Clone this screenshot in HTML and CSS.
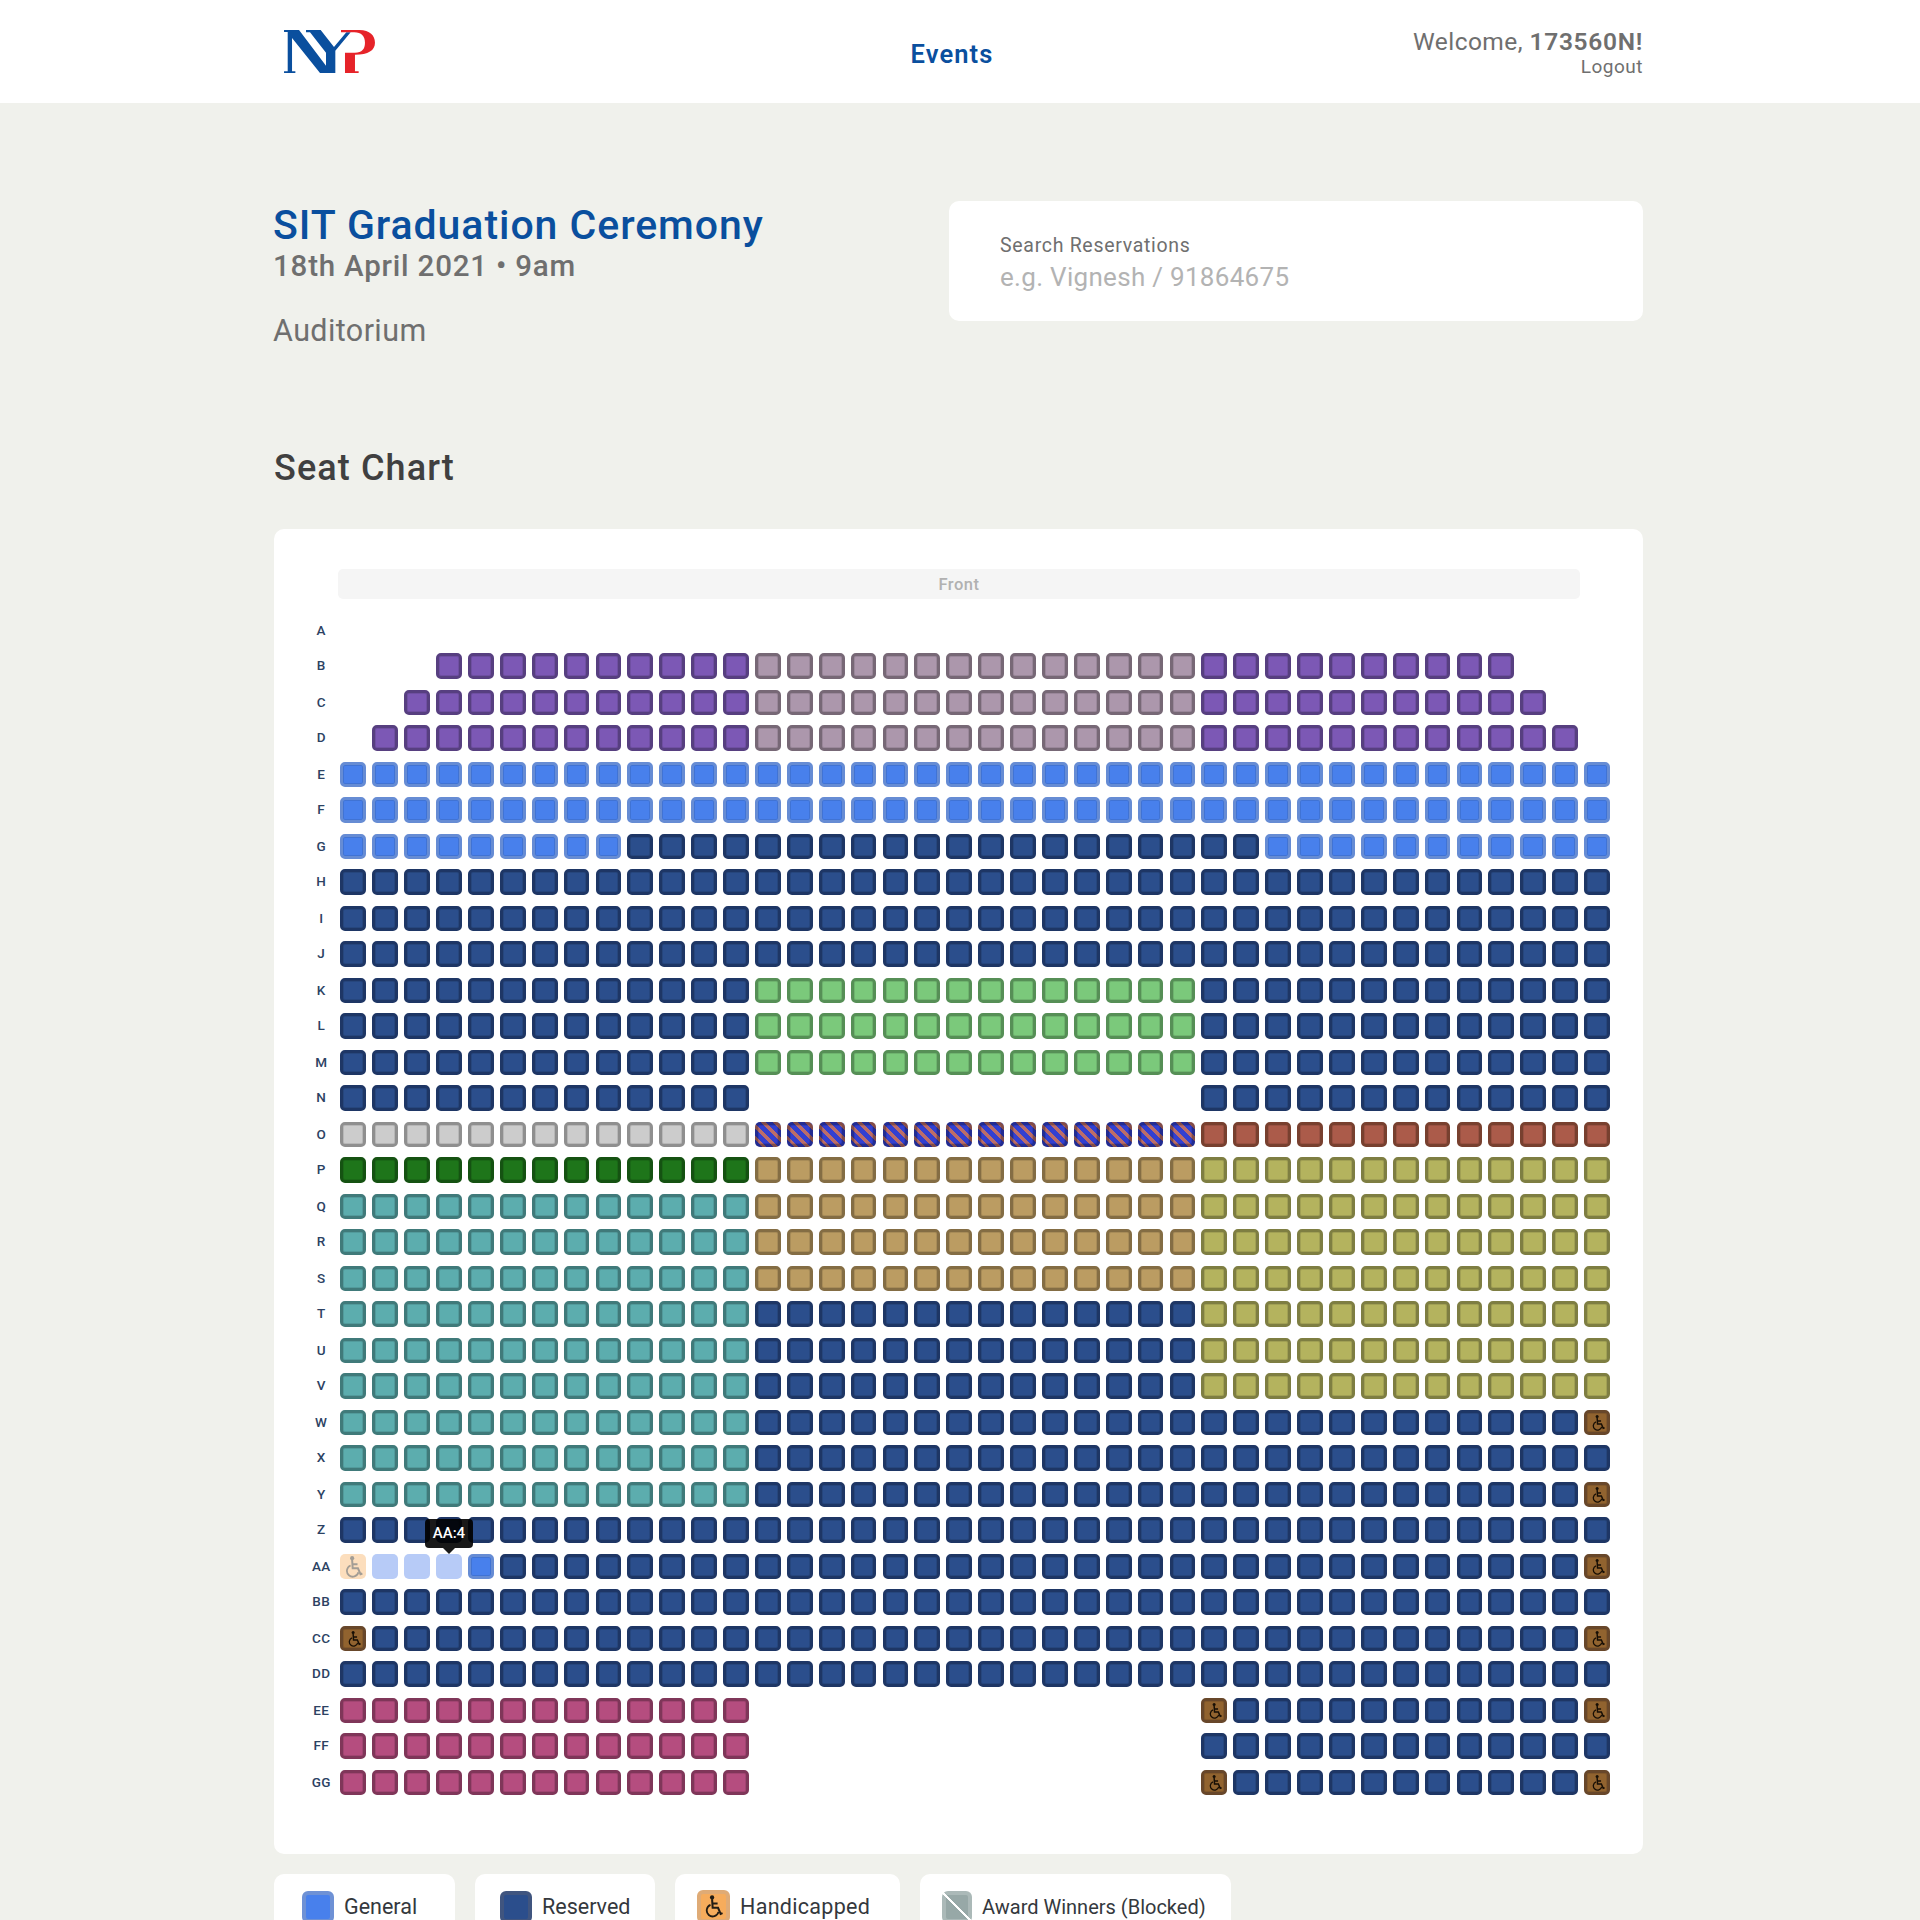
FILE: index.html
```html
<!DOCTYPE html>
<html lang="en">
<head>
<meta charset="utf-8">
<title>SIT Graduation Ceremony</title>
<link rel="stylesheet" href="styles.css">
</head>
<body>
<svg class="sprite" aria-hidden="true">
  <symbol id="wheelchair" viewBox="0 0 16 20">
    <circle cx="6.3" cy="2" r="1.9" fill="currentColor"/>
    <path d="M6.3 3.5 6.8 11.2H11.6L13.9 16.6 15.6 15.9M6.6 7.4H11.2" fill="none" stroke="currentColor" stroke-width="1.8"/>
    <path d="M4.9 8.6A5.3 5.3 0 1 0 12 14.8" fill="none" stroke="currentColor" stroke-width="1.6"/>
  </symbol>
</svg>

<header class="topbar">
  <svg class="logo" viewBox="0 0 273 130" aria-label="NYP">
    <path fill="#0a4f9e" d="M0 0H45L126 107V68L78 7H66V0H110L150 51 187 7H200L154 62V129H108L24 24V124H34V129H0V124H11V6H0Z"/>
    <path fill="#e62329" d="M171 0H226C258 0 273 17 273 38 273 61 253 74 213 74V124H224V129H183V68H213C234 68 243 57 243 38 243 18 232 7 211 7H171Z"/>
  </svg>
  <nav class="nav"><a class="nav-link">Events</a></nav>
  <div class="account">
    <div class="welcome">Welcome, <b class="user">173560N!</b></div>
    <a class="logout">Logout</a>
  </div>
</header>

<main class="page">
  <section class="intro">
    <div class="event">
      <h1 class="event-title">SIT Graduation Ceremony</h1>
      <p class="event-date">18th April 2021 • 9am</p>
      <p class="event-venue">Auditorium</p>
    </div>
    <div class="search">
      <label class="search-label" for="q">Search Reservations</label>
      <input class="search-input" id="q" placeholder="e.g. Vignesh / 91864675">
    </div>
  </section>

  <h2 class="section-title">Seat Chart</h2>

  <section class="chart">
    <div class="front">Front</div>
    <div class="rows" id="rows"></div>
  </section>

  <section class="legend">
    <div class="legend-item legend-general"><span class="swatch general"></span>General</div>
    <div class="legend-item legend-reserved"><span class="swatch reserved"></span>Reserved</div>
    <div class="legend-item legend-handicapped"><span class="swatch handicapped"><svg class="swatch-icon"><use href="#wheelchair"/></svg></span>Handicapped</div>
    <div class="legend-item legend-award"><span class="swatch award"></span>Award Winners (Blocked)</div>
  </section>
</main>
<script src="seats.js"></script>
</body>
</html>
```
FILE: styles.css
```css
* { box-sizing: border-box; }
body {
  margin: 0;
  height: 1920px;
  overflow: hidden;
  background: #f0f1ec;
  font-family: Roboto, "Liberation Sans", sans-serif;
  color: #6f6f6f;
}
h1, h2, p { margin: 0; }
.sprite { display: none; }

.topbar {
  display: grid;
  grid-template-columns: 1fr auto 1fr;
  height: 103px;
  padding: 0 277px 0 284px;
  background: #fff;
}
.logo { width: 91px; height: 43.3px; margin-top: 29.5px; }
.nav-link {
  display: block;
  margin: 39px 23px 0 0;
  font-size: 25.5px;
  line-height: 30px;
  font-weight: 600;
  letter-spacing: 1.1px;
  color: #0a4f9e;
}
.account { margin-top: 27px; text-align: right; }
.welcome { font-size: 24.5px; line-height: 29px; letter-spacing: .45px; }
.user { font-weight: 600; letter-spacing: .7px; }
.logout { display: block; font-size: 19px; line-height: 22px; letter-spacing: .5px; }

.page { width: 1369px; margin-left: 274px; padding-top: 98px; }
.intro { display: flex; justify-content: space-between; height: 242px; }
.event { margin-left: -1px; }
.event-title {
  font-size: 41px;
  line-height: 48px;
  font-weight: 550;
  letter-spacing: .95px;
  color: #0a4f9e;
}
.event-date { margin-top: -1px; font-size: 29.5px; line-height: 36px; font-weight: 550; letter-spacing: .8px; }
.event-venue { margin-top: 29px; font-size: 30.5px; line-height: 36px; letter-spacing: .4px; }

.search {
  width: 694px;
  height: 120px;
  padding: 33px 50px 0 51px;
  border-radius: 10px;
  background: #fff;
}
.search-label { display: block; font-size: 19.5px; line-height: 24px; letter-spacing: .7px; }
.search-input {
  display: block;
  width: 100%;
  height: 34px;
  margin-top: 2px;
  padding: 0;
  border: 0;
  outline: 0;
  background: none;
  font: 26px/34px Roboto, "Liberation Sans", sans-serif;
  letter-spacing: .3px;
}
.search-input::placeholder { color: #b3b3b3; }

.section-title {
  height: 86px;
  padding-top: 4px;
  font-size: 36px;
  line-height: 42px;
  font-weight: 550;
  letter-spacing: 1.1px;
  color: #404040;
}

.chart { height: 1325px; padding-top: 40px; border-radius: 10px; background: #fff; }
.front {
  width: 1242px;
  height: 30px;
  margin-left: 64px;
  border-radius: 5px;
  background: #f5f5f5;
  color: #b1b1b1;
  font-size: 16.5px;
  line-height: 31px;
  font-weight: 500;
  letter-spacing: .5px;
  text-align: center;
}
.rows { margin: 19px 0 0 28px; }
.row { display: flex; height: 36px; }
.row-label {
  width: 38.4px;
  text-align: center;
  font-size: 13.5px;
  line-height: 24px;
  font-weight: 500;
  letter-spacing: .3px;
  color: #2c4263;
}
.row:nth-child(even) .row-label { margin-top: -1px; }
.cell { width: 31.9px; }
.seat {
  position: relative;
  display: flex;
  align-items: center;
  justify-content: center;
  width: 25.8px;
  height: 25px;
  border: 3px solid;
  border-radius: 5px;
  box-shadow: inset 0 0 0 1px rgba(0, 0, 0, .1);
}
.row:nth-child(even) .seat { height: 26px; margin-top: -1px; }

.general { background: #4880ec; border-color: #668cd4; }
.reserved { background: #2b4e8c; border-color: #1e3665; }
.purple { background: #7c58b5; border-color: #573f80; }
.mauve { background: #ac97ac; border-color: #776876; }
.lime { background: #7bc97b; border-color: #568f56; }
.grey { background: #cccccc; border-color: #8f8f8f; }
.rust { background: #ab5b4a; border-color: #78402f; }
.forest { background: #1e751a; border-color: #155212; }
.tan { background: #bb9c62; border-color: #846d44; }
.olive { background: #b4b35e; border-color: #7e7e42; }
.teal { background: #5cadae; border-color: #407a7a; }
.pink { background: #b54d7f; border-color: #7f3659; }
.striped {
  border-color: rgba(0, 0, 0, .3);
  background: repeating-linear-gradient(45deg, #3340d0 0 5px, #bb6d69 5px 8.4px) border-box;
}
.accessible { background: #91632f; border-color: #68472a; color: #160e05; }
.seat.picked { border-color: transparent; box-shadow: none; background: #b7cbf7 border-box; }
.seat.accessible-picked { border-color: transparent; box-shadow: none; background: #fcdebd border-box; color: #a39d95; }
.seat-icon { flex: none; width: 13px; height: 16px; margin-left: 2px; }
.accessible-picked .seat-icon { width: 18px; height: 22px; }

.tip {
  position: absolute;
  left: 50%;
  bottom: 28px;
  z-index: 1;
  width: 48px;
  height: 29px;
  transform: translateX(-50%);
  border-radius: 4px;
  background: rgba(0, 0, 0, .9);
  color: #fff;
  font-size: 15px;
  line-height: 29px;
  font-weight: 500;
  text-align: center;
}
.tip::after {
  content: "";
  position: absolute;
  top: 100%;
  left: 18px;
  border: 6px solid transparent;
  border-top-color: rgba(0, 0, 0, .9);
  border-bottom: 0;
}

.legend { display: flex; gap: 20px; margin-top: 20px; }
.legend-item {
  display: flex;
  align-items: center;
  height: 65px;
  border-radius: 10px;
  background: #fff;
  font-size: 21.5px;
  white-space: nowrap;
  color: #34383d;
}
.legend-general { width: 181px; padding-left: 28px; }
.legend-reserved { width: 180px; padding-left: 25px; }
.legend-handicapped { width: 225px; padding-left: 22px; letter-spacing: .3px; }
.legend-award { width: 311px; padding-left: 22px; font-size: 20px; }
.swatch {
  display: flex;
  align-items: center;
  justify-content: center;
  width: 32px;
  height: 32px;
  margin-right: 10px;
  border: 4px solid;
  border-radius: 6px;
}
.swatch.general { border-color: #6e91d5; }
.swatch.reserved { border-color: #40557f; }
.swatch.handicapped { width: 33px; height: 33px; background: #f6ac5c; border-color: #dfab76; color: #221c14; }
.swatch.award {
  width: 30px;
  border-color: rgba(255, 255, 255, .2);
  background: linear-gradient(45deg, #97a8a7 0 48%, #fff 48% 53%, #97a8a7 53%) border-box;
}
.swatch-icon { flex: none; width: 18px; height: 23px; }
```
FILE: seats.js
```js
// Each row is a list of [seat type, count] runs; "gap" leaves the places empty.
const fill = (n, runs) => Array(n).fill(runs);
const labels = [..."ABCDEFGHIJKLMNOPQRSTUVWXYZ", "AA", "BB", "CC", "DD", "EE", "FF", "GG"];
const allReserved = [["reserved", 40]];
const plan = [
  [],
  [["gap", 3], ["purple", 10], ["mauve", 14], ["purple", 10]],
  [["gap", 2], ["purple", 11], ["mauve", 14], ["purple", 11]],
  [["gap", 1], ["purple", 12], ["mauve", 14], ["purple", 12]],
  ...fill(2, [["general", 40]]),
  [["general", 9], ["reserved", 20], ["general", 11]],
  ...fill(3, allReserved),
  ...fill(3, [["reserved", 13], ["lime", 14], ["reserved", 13]]),
  [["reserved", 13], ["gap", 14], ["reserved", 13]],
  [["grey", 13], ["striped", 14], ["rust", 13]],
  [["forest", 13], ["tan", 14], ["olive", 13]],
  ...fill(3, [["teal", 13], ["tan", 14], ["olive", 13]]),
  ...fill(3, [["teal", 13], ["reserved", 14], ["olive", 13]]),
  [["teal", 13], ["reserved", 26], ["accessible", 1]],
  [["teal", 13], ["reserved", 27]],
  [["teal", 13], ["reserved", 26], ["accessible", 1]],
  allReserved,
  [["accessible-picked", 1], ["picked", 3], ["general", 1], ["reserved", 34], ["accessible", 1]],
  allReserved,
  [["accessible", 1], ["reserved", 38], ["accessible", 1]],
  allReserved,
  [["pink", 13], ["gap", 14], ["accessible", 1], ["reserved", 11], ["accessible", 1]],
  [["pink", 13], ["gap", 14], ["reserved", 13]],
  [["pink", 13], ["gap", 14], ["accessible", 1], ["reserved", 11], ["accessible", 1]],
];
const hovered = "AA:4";

const seat = (type, name) => {
  if (type === "gap") return '<div class="cell"></div>';
  const icon = type.startsWith("accessible")
    ? '<svg class="seat-icon"><use href="#wheelchair"/></svg>' : "";
  const tip = name === hovered ? `<span class="tip">${name}</span>` : "";
  return `<div class="cell"><div class="seat ${type}">${icon}${tip}</div></div>`;
};

document.getElementById("rows").innerHTML = plan.map((runs, i) => {
  let n = 0;
  const seats = runs.map(([type, count]) =>
    Array.from({ length: count }, () => seat(type, `${labels[i]}:${++n}`)).join("")).join("");
  return `<div class="row"><div class="row-label">${labels[i]}</div>${seats}</div>`;
}).join("");
```
